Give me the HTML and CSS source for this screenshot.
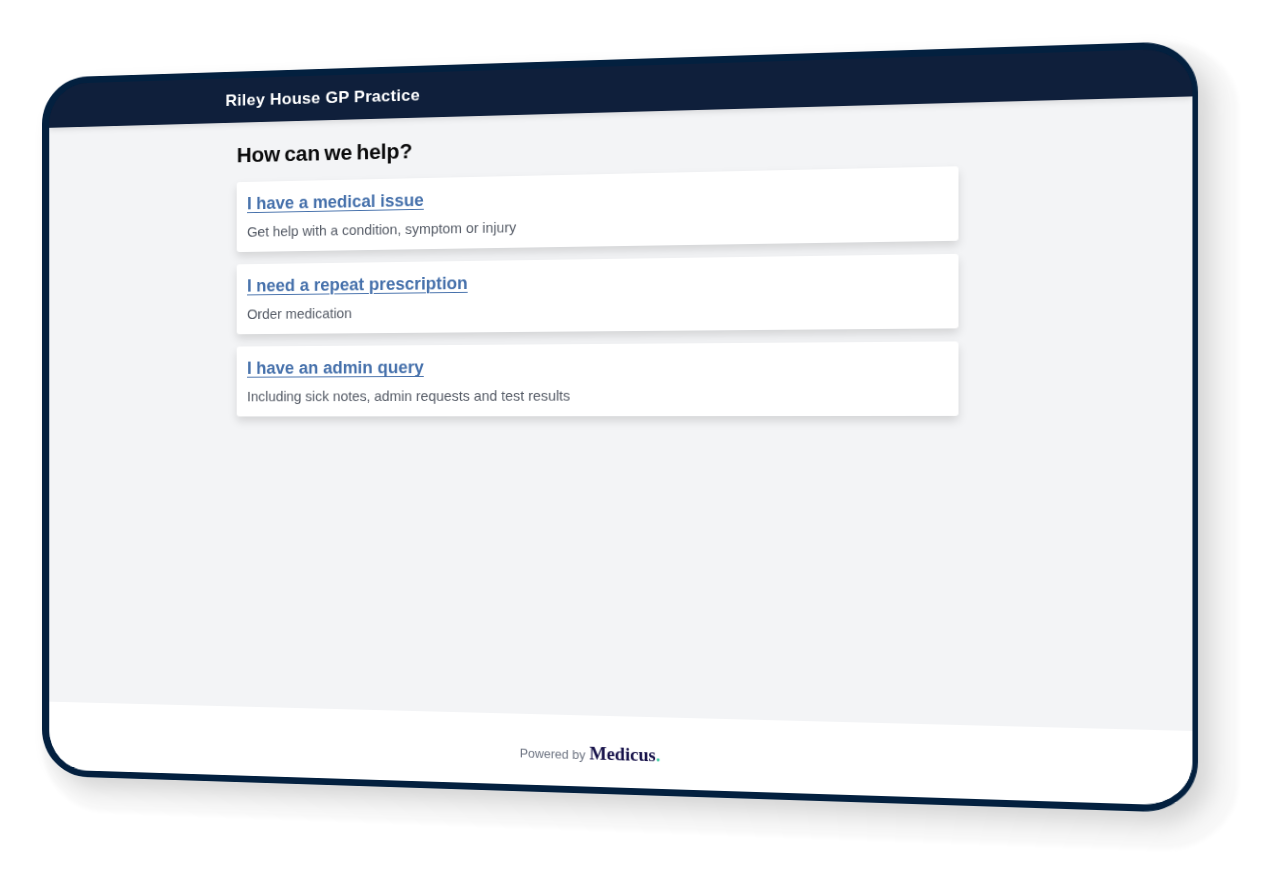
FILE: index.html
```html
<!DOCTYPE html>
<html lang="en">
<head>
<meta charset="utf-8">
<title>Riley House GP Practice</title>
<link rel="stylesheet" href="styles.css">
</head>
<body>
<div class="device">
  <div class="screen">
    <header class="topbar"><span class="practice">Riley House GP Practice</span></header>
    <main class="content">
      <h1 class="heading">How can we help?</h1>
      <section class="card">
        <a class="card-title" href="#">I have a medical issue</a>
        <p class="card-desc">Get help with a condition, symptom or injury</p>
      </section>
      <section class="card">
        <a class="card-title" href="#">I need a repeat prescription</a>
        <p class="card-desc">Order medication</p>
      </section>
      <section class="card">
        <a class="card-title" href="#">I have an admin query</a>
        <p class="card-desc">Including sick notes, admin requests and test results</p>
      </section>
    </main>
    <footer class="footer">
      <span class="powered">Powered by</span>
      <span class="brand">Medicus<span class="brand-dot">.</span></span>
    </footer>
  </div>
</div>
</body>
</html>
```
FILE: styles.css
```css
* { box-sizing: border-box; }
html, body { margin: 0; height: 895px; overflow: hidden; background: #fff; }
body { font-family: "Liberation Sans", Arial, sans-serif; }

.device {
  width: 1152px;
  height: 752px;
  transform-origin: 0 0;
  transform: matrix3d(0.90291, -0.035634, 0, -0.00008394,
                      0, 0.92793, 0, 0,
                      0, 0, 1, 0,
                      42, 77.9, 0, 1);
  border-style: solid;
  border-color: #03203f;
  border-width: 7px 5.5px 7px 8px;
  border-radius: 50px;
  overflow: hidden;
  background: linear-gradient(#0f1f3b 50%, #fff 50%);
  box-shadow: 12px 12px 22px rgba(0, 0, 0, 0.14), 18px 18px 5px 18px rgba(0, 0, 0, 0.03);
}
.screen {
  height: 100%;
  display: flex;
  flex-direction: column;
}
.topbar {
  position: relative;
  flex: 0 0 47px;
  display: flex;
  align-items: center;
  padding-left: 191px;
  background: #0f1f3b;
  box-shadow: 0 2px 6px rgba(0, 0, 0, 0.12);
}
.practice { color: #fff; font-weight: 700; font-size: 17px; letter-spacing: 0.3px; }
.content { flex: 1; padding: 21px 0 0 203px; background: #f3f4f6; }
.heading {
  margin: 0 0 14.5px;
  font-size: 22px;
  line-height: 27px;
  font-weight: 700;
  letter-spacing: -0.12px;
  word-spacing: -1.6px;
  color: #0b0b0c;
}
.card {
  width: 720.5px;
  height: 74px;
  margin-bottom: 13.4px;
  padding: 12px 11px 0;
  background: #fff;
  border-radius: 3px;
  box-shadow: 0 5px 10px rgba(0, 0, 0, 0.13);
}
.card-title {
  display: block;
  width: max-content;
  font-size: 17.6px;
  line-height: 22px;
  font-weight: 700;
  color: #4570ab;
  text-decoration: underline 1px;
  text-underline-offset: 2.5px;
  margin-bottom: 9px;
}
.card-desc { margin: 0; font-size: 14.4px; line-height: 20px; color: #555b66; }
.footer {
  flex: 0 0 73px;
  display: flex;
  align-items: center;
  justify-content: center;
  gap: 4px;
  padding-top: 6px;
  padding-right: 5px;
  background: #fff;
}
.powered { font-size: 12.5px; color: #6b7280; margin-top: 2px; }
.brand { font-family: "Liberation Serif", "Times New Roman", serif; font-weight: 700; font-size: 18.3px; color: #17124a; }
.brand-dot { color: #3cc9a0; }
```
